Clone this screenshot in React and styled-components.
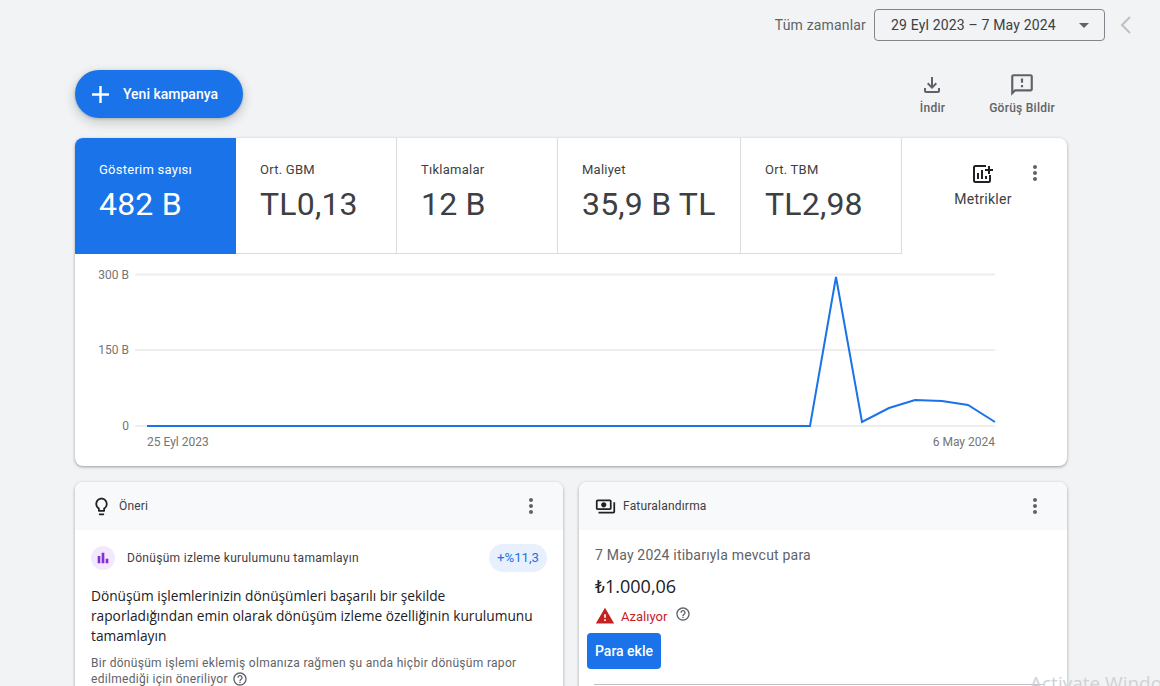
import React from 'react';
import styled, { createGlobalStyle } from 'styled-components';
import {
	MdAdd,
	MdArrowDropDown,
	MdBarChart,
	MdHelpOutline,
	MdMoreVert,
	MdOutlineFeedback,
	MdOutlineFileDownload,
	MdOutlineLightbulb,
	MdOutlinePayments,
	MdWarning,
} from 'react-icons/md';

const GlobalStyle = createGlobalStyle`
	html, body {
		margin: 0;
		height: 686px;
		overflow: hidden;
		background: #f1f3f4;
		font-family: Roboto, "Liberation Sans", sans-serif;
		color: #3c4043;
	}
	* { box-sizing: border-box; }
`;

const Page = styled.div`
	position: relative;
	width: 1160px;
	height: 686px;
	overflow: hidden;
`;

const TopBar = styled.div`
	height: 59px;
	padding: 9px 28px 0 0;
	display: flex;
	justify-content: flex-end;
	align-items: flex-start;
`;

const RangeLabel = styled.span`
	font-size: 14px;
	line-height: 32px;
	letter-spacing: 0.17px;
	color: #5f6368;
	margin-right: 8px;
`;

const DateButton = styled.div`
	width: 231px;
	height: 32px;
	padding: 0 8px 0 16px;
	border: 1px solid #80868b;
	border-radius: 4px;
	display: flex;
	align-items: center;
	justify-content: space-between;
	font-size: 14px;
	letter-spacing: 0.17px;
	color: #3c4043;
	svg { color: #5f6368; }
`;

const BackChevron = styled.svg`
	width: 12px;
	height: 20px;
	margin: 6px 0 0 15px;
`;

const Content = styled.div`
	padding: 0 93px 0 75px;
`;

const ActionRow = styled.div`
	height: 79px;
	display: flex;
	justify-content: space-between;
	align-items: flex-start;
`;

const NewCampaign = styled.div`
	width: 168px;
	height: 48px;
	margin-top: 11px;
	padding-left: 11px;
	border-radius: 24px;
	background: #1a73e8;
	color: #fff;
	display: flex;
	align-items: center;
	gap: 8px;
	font-size: 14px;
	font-weight: 500;
	box-shadow: 0 1px 3px rgba(60, 64, 67, 0.3), 0 4px 8px 3px rgba(60, 64, 67, 0.15);
`;

const Tools = styled.div`
	display: flex;
	margin: 13px 12px 0 0;
	gap: 44px;
`;

const Tool = styled.div`
	display: flex;
	flex-direction: column;
	align-items: center;
	gap: 2px;
	font-size: 12px;
	font-weight: 500;
	line-height: 16px;
	letter-spacing: 0.25px;
	color: #5f6368;
`;

const ToolIcon = styled.span`
	height: 26px;
	display: flex;
	align-items: center;
`;

const Card = styled.section`
	background: #fff;
	border-radius: 8px;
	overflow: hidden;
	box-shadow: 0 1px 2px rgba(60, 64, 67, 0.3), 0 1px 3px 1px rgba(60, 64, 67, 0.15);
`;

const Summary = styled(Card)`
	height: 328px;
`;

const Scorecards = styled.div`
	display: flex;
	height: 116px;
`;

const Tile = styled.div`
	width: ${(p) => p.$width}px;
	padding: 24px 0 0 24px;
	background: ${(p) => (p.$active ? '#1a73e8' : '#fff')};
	color: ${(p) => (p.$active ? '#fff' : '#3c4043')};
	border-right: ${(p) => (p.$active ? 'none' : '1px solid #dadce0')};
	border-bottom: ${(p) => (p.$active ? 'none' : '1px solid #dadce0')};
`;

const TileLabel = styled.div`
	font-size: 13px;
	line-height: 16px;
	letter-spacing: 0.25px;
`;

const TileValue = styled.div`
	margin-top: 8px;
	font-size: 32px;
	line-height: 36px;
	letter-spacing: 0.2px;
`;

const MetricsPanel = styled.div`
	flex: 1;
	position: relative;
	display: flex;
	flex-direction: column;
	align-items: center;
	padding: 26px 0 0 0;
	margin-right: 1px;
	font-size: 14px;
	line-height: 20px;
	letter-spacing: 0.25px;
	color: #3c4043;
`;

const MetricsButton = styled.div`
	display: flex;
	flex-direction: column;
	align-items: center;
	gap: 5px;
	margin-left: -2px;
`;

const MetricsIcon = styled.svg`
	display: block;
	width: 22px;
	height: 20px;
	margin-left: 3px;
`;

const CornerMenu = styled.div`
	position: absolute;
	top: 23px;
	right: 19px;
	color: #5f6368;
	line-height: 0;
`;

const ChartSvg = styled.svg`
	display: block;
	width: 992px;
	height: 212px;
	text {
		font-family: Roboto, "Liberation Sans", sans-serif;
		font-size: 12px;
		fill: #757575;
	}
`;

const CardGrid = styled.div`
	margin-top: 16px;
	display: grid;
	grid-template-columns: 488px 488px;
	gap: 16px;
`;

const LowerCard = styled(Card)`
	height: 260px;
`;

const CardHeader = styled.header`
	height: 48px;
	background: #f8f9fa;
	padding: 0 21px 0 16px;
	display: flex;
	align-items: center;
	gap: 7px;
	font-size: 12px;
	letter-spacing: 0.2px;
	color: #3c4043;
	svg:first-child { color: #202124; }
`;

const HeaderTitle = styled.span`
	flex: 1;
`;

const MenuIcon = styled(MdMoreVert)`
	color: #5f6368;
	margin-right: -1px;
`;

const CardBody = styled.div`
	padding: ${(p) => p.$padding};
`;

const TipRow = styled.div`
	height: 30px;
	display: flex;
	align-items: center;
	font-size: 12px;
	letter-spacing: 0.3px;
	color: #3c4043;
`;

const TipIcon = styled.span`
	width: 24px;
	height: 24px;
	border-radius: 50%;
	background: #f3e8fd;
	color: #8430ce;
	display: flex;
	align-items: center;
	justify-content: center;
	margin-right: 12px;
`;

const TipTitle = styled.span`
	flex: 1;
`;

const Uplift = styled.span`
	height: 28px;
	padding: 0 8px 0 8.5px;
	border-radius: 14px;
	background: #e8f0fe;
	color: #1a73e8;
	font-size: 13.2px;
	line-height: 28px;
	letter-spacing: 0;
`;

const TipHeadline = styled.p`
	margin: 13px 0 0;
	font-family: "Open Sans", Roboto, sans-serif;
	font-size: 13.72px;
	line-height: 20px;
	color: #202124;
`;

const TipNote = styled.p`
	margin: 9px 0 0;
	font-size: 12px;
	line-height: 16px;
	letter-spacing: 0.3px;
	color: #5f6368;
	svg { vertical-align: -4px; margin-left: 1px; }
`;

const BalanceDate = styled.div`
	margin-left: 8px;
	font-size: 14px;
	line-height: 20px;
	letter-spacing: 0.2px;
	color: #5f6368;
`;

const BalanceAmount = styled.div`
	margin: 11px 0 0 8px;
	font-family: "Open Sans", Roboto, sans-serif;
	font-size: 18px;
	line-height: 20px;
	color: #202124;
`;

const BalanceStatus = styled.div`
	margin: 10px 0 0 8px;
	height: 20px;
	display: flex;
	align-items: center;
	gap: 6px;
	font-size: 13px;
	color: #c5221f;
	svg:last-child { color: #5f6368; margin: -4px 0 0 2px; }
`;

const AddMoney = styled.div`
	width: 74px;
	height: 36px;
	margin-top: 7px;
	border-radius: 4px;
	background: #1a73e8;
	color: #fff;
	font-size: 14px;
	font-weight: 500;
	line-height: 36px;
	text-align: center;
`;

const Divider = styled.hr`
	margin: 15px 16px 0 7px;
	border: 0;
	border-top: 1px solid #bdc1c6;
`;

const Watermark = styled.div`
	position: absolute;
	left: 1030px;
	top: 670px;
	white-space: nowrap;
	font-family: "Open Sans", sans-serif;
	font-size: 19px;
	color: #d0d2d5;
`;

const tiles = [
	{ label: 'Gösterim sayısı', value: '482 B', width: 161, active: true },
	{ label: 'Ort. GBM', value: 'TL0,13', width: 161 },
	{ label: 'Tıklamalar', value: '12 B', width: 161 },
	{ label: 'Maliyet', value: '35,9 B TL', width: 183 },
	{ label: 'Ort. TBM', value: 'TL2,98', width: 161 },
];

const gridLines = [
	{ y: 20.5, label: '300 B' },
	{ y: 96, label: '150 B' },
	{ y: 172, label: '0' },
];

const seriesPoints = '72,172 735,172 761,23 787,168 814,154 840,146 867,147 893,151 920,168';

function PerformanceChart() {
	return (
		<ChartSvg viewBox="0 0 992 212">
			{gridLines.map((line) => (
				<g key={line.label}>
					<line x1="60" x2="920" y1={line.y} y2={line.y} stroke="#eeeeee" strokeWidth="2" />
					<text x="54" y={line.y + 4} textAnchor="end">{line.label}</text>
				</g>
			))}
			<polyline points={seriesPoints} fill="none" stroke="#1a73e8" strokeWidth="2" />
			<text x="72" y="192">25 Eyl 2023</text>
			<text x="920" y="192" textAnchor="end">6 May 2024</text>
		</ChartSvg>
	);
}

export default function App() {
	return (
		<Page>
			<GlobalStyle />
			<TopBar>
				<RangeLabel>Tüm zamanlar</RangeLabel>
				<DateButton>
					<span>29 Eyl 2023 – 7 May 2024</span>
					<MdArrowDropDown size={24} />
				</DateButton>
				<BackChevron viewBox="0 0 12 20">
					<polyline points="10,2 2,10 10,18" fill="none" stroke="#bdc1c6" strokeWidth="2" />
				</BackChevron>
			</TopBar>
			<Content>
				<ActionRow>
					<NewCampaign>
						<MdAdd size={29} />
						<span>Yeni kampanya</span>
					</NewCampaign>
					<Tools>
						<Tool>
							<ToolIcon>
								<MdOutlineFileDownload size={24} />
							</ToolIcon>
							<span>İndir</span>
						</Tool>
						<Tool>
							<ToolIcon>
								<MdOutlineFeedback size={26} />
							</ToolIcon>
							<span>Görüş Bildir</span>
						</Tool>
					</Tools>
				</ActionRow>
				<Summary>
					<Scorecards>
						{tiles.map((tile) => (
							<Tile key={tile.label} $width={tile.width} $active={tile.active}>
								<TileLabel>{tile.label}</TileLabel>
								<TileValue>{tile.value}</TileValue>
							</Tile>
						))}
						<MetricsPanel>
							<MetricsButton>
								<MetricsIcon viewBox="0 0 22 20">
									<path
										d="M13 2H2.5A1.5 1.5 0 0 0 1 3.5v13A1.5 1.5 0 0 0 2.5 18h13a1.5 1.5 0 0 0 1.5-1.5V11"
										fill="none"
										stroke="#202124"
										strokeWidth="2"
									/>
									<path d="M16 2v8M12 6h8" fill="none" stroke="#202124" strokeWidth="2" />
									<path d="M4 9h2v6H4zM8 6h2v9H8zM12 12h2v3h-2z" fill="#202124" />
								</MetricsIcon>
								<span>Metrikler</span>
							</MetricsButton>
							<CornerMenu>
								<MdMoreVert size={24} />
							</CornerMenu>
						</MetricsPanel>
					</Scorecards>
					<PerformanceChart />
				</Summary>
				<CardGrid>
					<LowerCard>
						<CardHeader>
							<MdOutlineLightbulb size={21} />
							<HeaderTitle>Öneri</HeaderTitle>
							<MenuIcon size={24} />
						</CardHeader>
						<CardBody $padding="13px 16px 0">
							<TipRow>
								<TipIcon>
									<MdBarChart size={16} />
								</TipIcon>
								<TipTitle>Dönüşüm izleme kurulumunu tamamlayın</TipTitle>
								<Uplift>+%11,3</Uplift>
							</TipRow>
							<TipHeadline>
								Dönüşüm işlemlerinizin dönüşümleri başarılı bir şekilde raporladığından emin olarak
								dönüşüm izleme özelliğinin kurulumunu tamamlayın
							</TipHeadline>
							<TipNote>
								Bir dönüşüm işlemi eklemiş olmanıza rağmen şu anda hiçbir dönüşüm rapor edilmediği
								için öneriliyor <MdHelpOutline size={16} />
							</TipNote>
						</CardBody>
					</LowerCard>
					<LowerCard>
						<CardHeader>
							<MdOutlinePayments size={21} />
							<HeaderTitle>Faturalandırma</HeaderTitle>
							<MenuIcon size={24} />
						</CardHeader>
						<CardBody $padding="15px 8px 0">
							<BalanceDate>7 May 2024 itibarıyla mevcut para</BalanceDate>
							<BalanceAmount>₺1.000,06</BalanceAmount>
							<BalanceStatus>
								<MdWarning size={20} />
								<span>Azalıyor</span>
								<MdHelpOutline size={16} />
							</BalanceStatus>
							<AddMoney>Para ekle</AddMoney>
							<Divider />
						</CardBody>
					</LowerCard>
				</CardGrid>
			</Content>
			<Watermark>Activate Windows</Watermark>
		</Page>
	);
}
